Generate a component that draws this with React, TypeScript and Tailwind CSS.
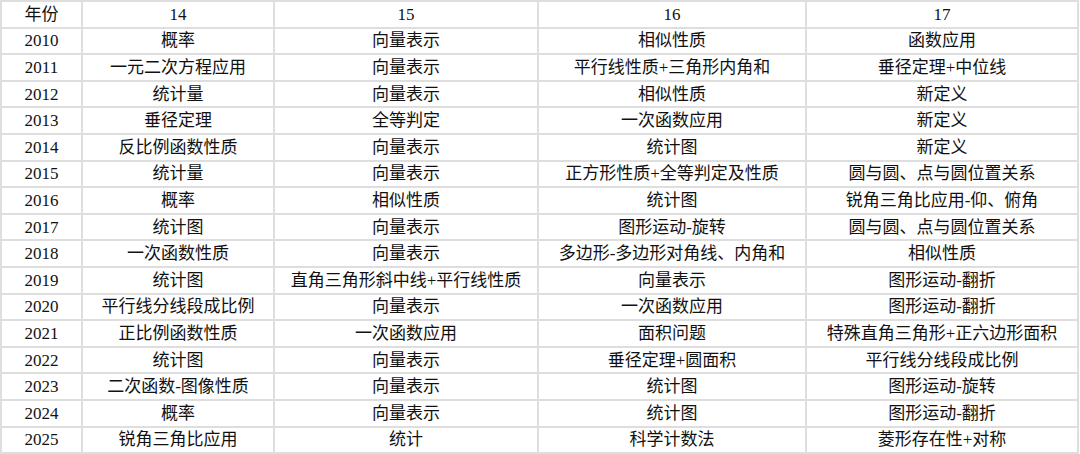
const header = ['年份', '14', '15', '16', '17'];

const rows: string[][] = [
  ['2010', '概率', '向量表示', '相似性质', '函数应用'],
  ['2011', '一元二次方程应用', '向量表示', '平行线性质+三角形内角和', '垂径定理+中位线'],
  ['2012', '统计量', '向量表示', '相似性质', '新定义'],
  ['2013', '垂径定理', '全等判定', '一次函数应用', '新定义'],
  ['2014', '反比例函数性质', '向量表示', '统计图', '新定义'],
  ['2015', '统计量', '向量表示', '正方形性质+全等判定及性质', '圆与圆、点与圆位置关系'],
  ['2016', '概率', '相似性质', '统计图', '锐角三角比应用-仰、俯角'],
  ['2017', '统计图', '向量表示', '图形运动-旋转', '圆与圆、点与圆位置关系'],
  ['2018', '一次函数性质', '向量表示', '多边形-多边形对角线、内角和', '相似性质'],
  ['2019', '统计图', '直角三角形斜中线+平行线性质', '向量表示', '图形运动-翻折'],
  ['2020', '平行线分线段成比例', '向量表示', '一次函数应用', '图形运动-翻折'],
  ['2021', '正比例函数性质', '一次函数应用', '面积问题', '特殊直角三角形+正六边形面积'],
  ['2022', '统计图', '向量表示', '垂径定理+圆面积', '平行线分线段成比例'],
  ['2023', '二次函数-图像性质', '向量表示', '统计图', '图形运动-旋转'],
  ['2024', '概率', '向量表示', '统计图', '图形运动-翻折'],
  ['2025', '锐角三角比应用', '统计', '科学计数法', '菱形存在性+对称'],
];

export default function App() {
  const all = [header, ...rows];
  return (
    <div className="w-[1080px] h-[454px] bg-white overflow-hidden">
      <div className="grid grid-cols-[81px_192px_264px_268px_272px] auto-rows-[26.6px] w-max border-r-2 border-b-2 border-[#dedede] font-['Liberation_Serif','Noto_Sans_CJK_SC',serif] text-[17px] text-[#111111]">
        {all.map((r, i) =>
          r.map((c, j) => (
            <div
              key={`${i}-${j}`}
              className="flex items-center justify-center whitespace-nowrap border-l-2 border-t-2 border-[#dedede] leading-none"
            >
              {c}
            </div>
          ))
        )}
      </div>
    </div>
  );
}
